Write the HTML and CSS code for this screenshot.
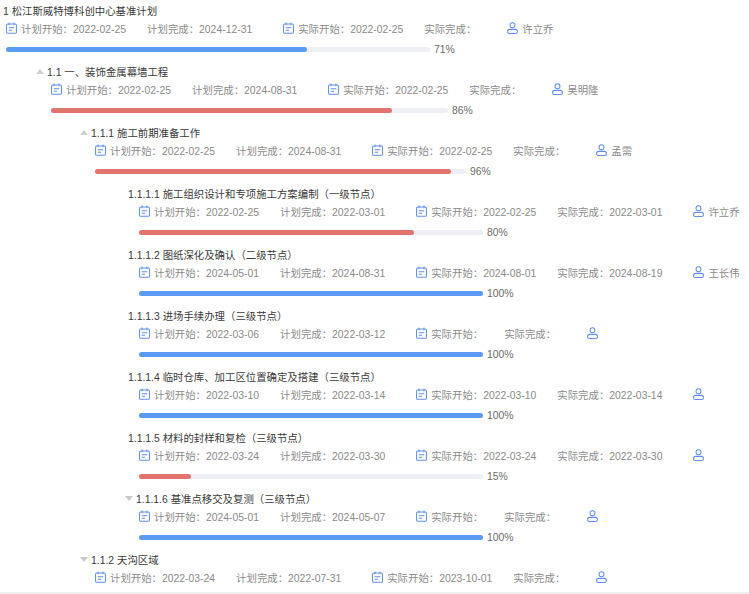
FILE: index.html
```html
<!DOCTYPE html>
<html lang="zh">
<head>
<meta charset="utf-8">
<title>松江斯威特博科创中心基准计划</title>
<link rel="stylesheet" href="styles.css">
</head>
<body>
<svg class="defs" width="0" height="0" aria-hidden="true">
  <symbol id="cal" viewBox="0 0 12 13">
    <rect x="0.6" y="2.1" width="10.8" height="10.2" rx="1.3" fill="none" stroke="currentColor" stroke-width="1.1"/>
    <path d="M3.3 0.6v3M8.7 0.6v3M3 6.1h6M3 8.9h3.6" fill="none" stroke="currentColor" stroke-width="1.1"/>
  </symbol>
  <symbol id="user" viewBox="0 0 12 13">
    <circle cx="6" cy="3.4" r="2.7" fill="none" stroke="currentColor" stroke-width="1.1"/>
    <rect x="0.6" y="8" width="10.8" height="4.4" rx="2.2" fill="none" stroke="currentColor" stroke-width="1.1"/>
  </symbol>
</svg>
<main class="tree">

<section class="node lv0">
  <div class="title">1 松江斯威特博科创中心基准计划</div>
  <div class="meta">
    <span class="item"><svg class="ico"><use href="#cal"/></svg>计划开始：2022-02-25</span>
    <span class="item">计划完成：2024-12-31</span>
    <span class="item ic"><svg class="ico"><use href="#cal"/></svg>实际开始：2022-02-25</span>
    <span class="item">实际完成：</span>
    <span class="item ic"><svg class="ico"><use href="#user"/></svg>许立乔</span>
  </div>
  <div class="prog"><div class="track"><div class="fill blue" style="width:71%"></div></div><span class="pct">71%</span></div>
</section>

<section class="node lv1">
  <div class="title"><i class="caret up"></i>1.1 一、装饰金属幕墙工程</div>
  <div class="meta">
    <span class="item"><svg class="ico"><use href="#cal"/></svg>计划开始：2022-02-25</span>
    <span class="item">计划完成：2024-08-31</span>
    <span class="item ic"><svg class="ico"><use href="#cal"/></svg>实际开始：2022-02-25</span>
    <span class="item">实际完成：</span>
    <span class="item ic"><svg class="ico"><use href="#user"/></svg>吴明隆</span>
  </div>
  <div class="prog"><div class="track"><div class="fill red" style="width:86%"></div></div><span class="pct">86%</span></div>
</section>

<section class="node lv2">
  <div class="title"><i class="caret up"></i>1.1.1 施工前期准备工作</div>
  <div class="meta">
    <span class="item"><svg class="ico"><use href="#cal"/></svg>计划开始：2022-02-25</span>
    <span class="item">计划完成：2024-08-31</span>
    <span class="item ic"><svg class="ico"><use href="#cal"/></svg>实际开始：2022-02-25</span>
    <span class="item">实际完成：</span>
    <span class="item ic"><svg class="ico"><use href="#user"/></svg>孟需</span>
  </div>
  <div class="prog"><div class="track"><div class="fill red" style="width:96%"></div></div><span class="pct">96%</span></div>
</section>

<section class="node lv3">
  <div class="title leaf">1.1.1.1 施工组织设计和专项施工方案编制（一级节点）</div>
  <div class="meta">
    <span class="item"><svg class="ico"><use href="#cal"/></svg>计划开始：2022-02-25</span>
    <span class="item">计划完成：2022-03-01</span>
    <span class="item ic"><svg class="ico"><use href="#cal"/></svg>实际开始：2022-02-25</span>
    <span class="item">实际完成：2022-03-01</span>
    <span class="item ic"><svg class="ico"><use href="#user"/></svg>许立乔</span>
  </div>
  <div class="prog"><div class="track"><div class="fill red" style="width:80%"></div></div><span class="pct">80%</span></div>
</section>

<section class="node lv3">
  <div class="title leaf">1.1.1.2 图纸深化及确认（二级节点）</div>
  <div class="meta">
    <span class="item"><svg class="ico"><use href="#cal"/></svg>计划开始：2024-05-01</span>
    <span class="item">计划完成：2024-08-31</span>
    <span class="item ic"><svg class="ico"><use href="#cal"/></svg>实际开始：2024-08-01</span>
    <span class="item">实际完成：2024-08-19</span>
    <span class="item ic"><svg class="ico"><use href="#user"/></svg>王长伟</span>
  </div>
  <div class="prog"><div class="track"><div class="fill blue" style="width:100%"></div></div><span class="pct">100%</span></div>
</section>

<section class="node lv3">
  <div class="title leaf">1.1.1.3 进场手续办理（三级节点）</div>
  <div class="meta">
    <span class="item"><svg class="ico"><use href="#cal"/></svg>计划开始：2022-03-06</span>
    <span class="item">计划完成：2022-03-12</span>
    <span class="item ic"><svg class="ico"><use href="#cal"/></svg>实际开始：</span>
    <span class="item">实际完成：</span>
    <span class="item ic"><svg class="ico"><use href="#user"/></svg></span>
  </div>
  <div class="prog"><div class="track"><div class="fill blue" style="width:100%"></div></div><span class="pct">100%</span></div>
</section>

<section class="node lv3">
  <div class="title leaf">1.1.1.4 临时仓库、加工区位置确定及搭建（三级节点）</div>
  <div class="meta">
    <span class="item"><svg class="ico"><use href="#cal"/></svg>计划开始：2022-03-10</span>
    <span class="item">计划完成：2022-03-14</span>
    <span class="item ic"><svg class="ico"><use href="#cal"/></svg>实际开始：2022-03-10</span>
    <span class="item">实际完成：2022-03-14</span>
    <span class="item ic"><svg class="ico"><use href="#user"/></svg></span>
  </div>
  <div class="prog"><div class="track"><div class="fill blue" style="width:100%"></div></div><span class="pct">100%</span></div>
</section>

<section class="node lv3">
  <div class="title leaf">1.1.1.5 材料的封样和复检（三级节点）</div>
  <div class="meta">
    <span class="item"><svg class="ico"><use href="#cal"/></svg>计划开始：2022-03-24</span>
    <span class="item">计划完成：2022-03-30</span>
    <span class="item ic"><svg class="ico"><use href="#cal"/></svg>实际开始：2022-03-24</span>
    <span class="item">实际完成：2022-03-30</span>
    <span class="item ic"><svg class="ico"><use href="#user"/></svg></span>
  </div>
  <div class="prog"><div class="track"><div class="fill red" style="width:15%"></div></div><span class="pct">15%</span></div>
</section>

<section class="node lv3">
  <div class="title"><i class="caret down"></i>1.1.1.6 基准点移交及复测（三级节点）</div>
  <div class="meta">
    <span class="item"><svg class="ico"><use href="#cal"/></svg>计划开始：2024-05-01</span>
    <span class="item">计划完成：2024-05-07</span>
    <span class="item ic"><svg class="ico"><use href="#cal"/></svg>实际开始：</span>
    <span class="item">实际完成：</span>
    <span class="item ic"><svg class="ico"><use href="#user"/></svg></span>
  </div>
  <div class="prog"><div class="track"><div class="fill blue" style="width:100%"></div></div><span class="pct">100%</span></div>
</section>

<section class="node lv2">
  <div class="title"><i class="caret down"></i>1.1.2 天沟区域</div>
  <div class="meta">
    <span class="item"><svg class="ico"><use href="#cal"/></svg>计划开始：2022-03-24</span>
    <span class="item">计划完成：2022-07-31</span>
    <span class="item ic"><svg class="ico"><use href="#cal"/></svg>实际开始：2023-10-01</span>
    <span class="item">实际完成：</span>
    <span class="item ic"><svg class="ico"><use href="#user"/></svg></span>
  </div>
</section>

</main>
<div class="scrollbar"></div>
</body>
</html>
```

FILE: styles.css
```css
html, body {
  margin: 0;
  height: 100%;
  background: #fff;
  overflow: hidden;
}
body {
  display: flex;
  flex-direction: column;
  font-family: "Liberation Sans", "Noto Sans CJK SC", sans-serif;
  font-size: 10.4px;
  color: #8a8a8a;
}
.defs { position: absolute; }
.tree {
  flex: 1;
  min-height: 0;
  overflow: hidden;
  padding-top: 1px;
}
.node { height: 61px; }
.title {
  display: flex;
  align-items: center;
  height: 18px;
  color: #3a3a3a;
  white-space: pre;
}
.caret {
  width: 0;
  height: 0;
  margin-right: 3px;
  border-left: 4px solid transparent;
  border-right: 4px solid transparent;
}
.caret.up { border-bottom: 5px solid #d0d0d0; }
.caret.down { border-top: 5px solid #c8c8c8; }

.lv0 .title { padding-left: 3px; }
.lv1 .title { padding-left: 36px; }
.lv2 .title { padding-left: 80px; }
.lv3 .title { padding-left: 125px; }
.lv3 .title.leaf { padding-left: 128px; }

.lv0 .meta, .lv0 .prog { margin-left: 6px; }
.lv1 .meta, .lv1 .prog { margin-left: 51px; }
.lv2 .meta, .lv2 .prog { margin-left: 95px; }
.lv3 .meta, .lv3 .prog { margin-left: 139px; }

.lv0 .track { width: 424px; }
.lv1 .track { width: 397px; }
.lv2 .track { width: 371px; }
.lv3 .track { width: 344px; }

.meta {
  display: flex;
  align-items: center;
  gap: 21px;
  height: 18px;
  white-space: nowrap;
}
.item {
  display: inline-flex;
  align-items: center;
}
.item.ic { margin-left: 10px; }
.ico {
  width: 11px;
  height: 12px;
  margin-right: 4px;
  color: #5f8ff0;
  flex: none;
}
.prog {
  display: flex;
  align-items: center;
  gap: 4px;
  height: 24px;
}
.track {
  height: 5px;
  border-radius: 3px;
  background: #eeeff5;
  flex: none;
}
.fill {
  height: 100%;
  border-radius: 3px;
}
.fill.blue { background: #5b9bf6; }
.fill.red { background: #e3736d; }
.pct { color: #6a6a6a; }
.scrollbar {
  flex: none;
  height: 2px;
  background: #efefef;
}
```
